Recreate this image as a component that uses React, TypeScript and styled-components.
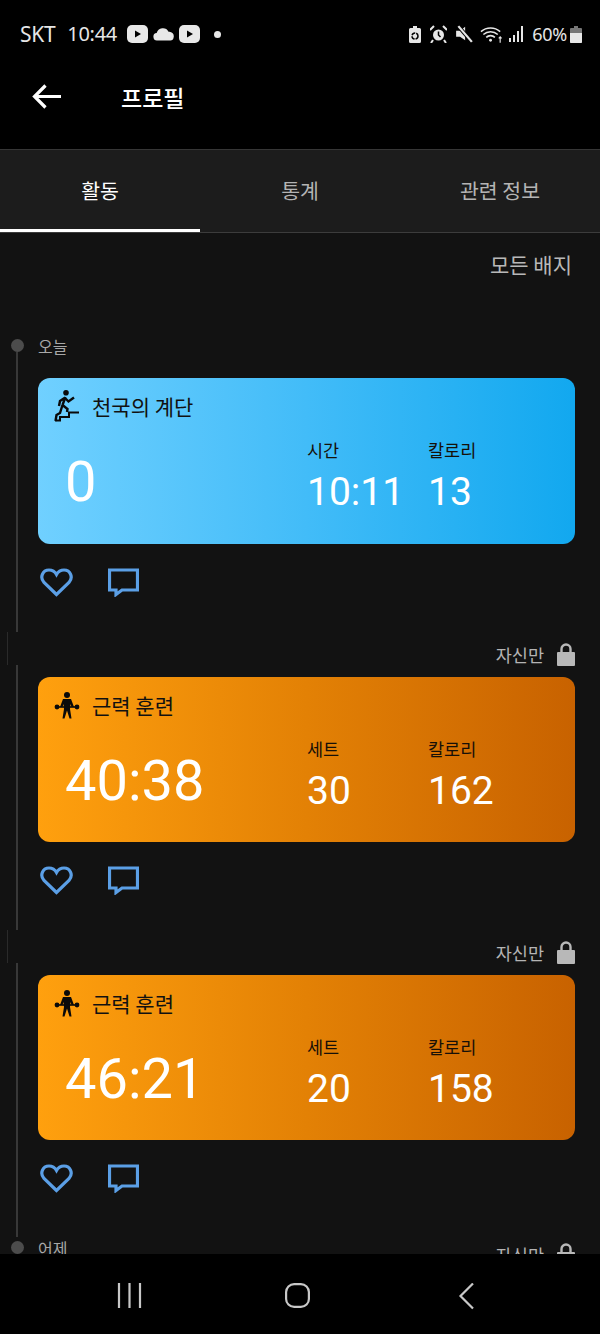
import React from "react";
import styled, { createGlobalStyle } from "styled-components";

const GlobalStyle = createGlobalStyle`
  html, body {
    margin: 0;
    padding: 0;
    background: #000;
  }
  * {
    box-sizing: border-box;
  }
`;

const KOREAN = `"Noto Sans CJK KR", "Noto Sans", sans-serif`;

const Screen = styled.div`
  width: 600px;
  height: 1334px;
  display: flex;
  flex-direction: column;
  overflow: hidden;
  background: #000;
  font-family: ${KOREAN};
`;

const StatusBar = styled.div`
  height: 68px;
  flex-shrink: 0;
  display: flex;
  align-items: center;
  justify-content: space-between;
  padding: 0 18px 0 20px;
  color: #e6e6e6;
`;

const StatusGroup = styled.div`
  display: flex;
  align-items: center;
`;

const StatusText = styled.span<{ $size?: number; $gap?: number }>`
  font-family: "Noto Sans", sans-serif;
  font-size: ${(p) => p.$size ?? 21}px;
  line-height: 24px;
  margin-right: ${(p) => p.$gap ?? 0}px;
  letter-spacing: -0.3px;
`;

const Header = styled.header`
  height: 81px;
  flex-shrink: 0;
  display: flex;
  align-items: flex-start;
  padding: 14px 0 0 32px;
  gap: 59px;
`;

const Title = styled.h1`
  margin: 0;
  color: #fff;
  font-size: 23px;
  font-weight: 500;
  line-height: 30px;
`;

const Tabs = styled.nav`
  height: 84px;
  flex-shrink: 0;
  display: grid;
  grid-template-columns: repeat(3, 200px);
  background: #1c1c1c;
  border-top: 1px solid #363636;
  border-bottom: 1px solid #3c3c3c;
`;

const Tab = styled.div<{ $active?: boolean }>`
  display: flex;
  align-items: center;
  justify-content: center;
  font-size: 20.5px;
  color: ${(p) => (p.$active ? "#fff" : "#b4b4b4")};
  border-bottom: 3px solid ${(p) => (p.$active ? "#fff" : "transparent")};
`;

const Main = styled.main`
  flex: 1;
  min-height: 0;
  overflow: hidden;
  background: #121212;
`;

const BadgeRow = styled.div`
  height: 100px;
  display: flex;
  justify-content: flex-end;
  padding: 17px 28px 0 0;
  color: #b8b8b8;
  font-size: 21px;
  line-height: 28px;
`;

const Entry = styled.article<{ $height?: number }>`
  display: flex;
  height: ${(p) => p.$height ?? 298}px;
`;

const Rail = styled.div`
  width: 38px;
  flex-shrink: 0;
  display: flex;
  flex-direction: column;
`;

const RailLine = styled.div<{ $height?: number }>`
  width: 2px;
  margin-left: 16px;
  background: #383838;
  ${(p) => (p.$height ? `height: ${p.$height}px;` : "flex: 1;")}
`;

const RailStub = styled.div`
  width: 1px;
  height: 33px;
  margin-left: 7px;
  background: #2a2a2a;
`;

const Dot = styled.div<{ $top: number }>`
  width: 13px;
  height: 13px;
  margin: ${(p) => p.$top}px 0 0 11px;
  border-radius: 50%;
  background: #4c4c4c;
`;

const Body = styled.div`
  flex: 1;
  min-width: 0;
  padding-right: 25px;
`;

const Head = styled.div`
  height: 45px;
  display: flex;
  align-items: flex-start;
  justify-content: space-between;
`;

const DateLabel = styled.span<{ $top: number }>`
  margin-top: ${(p) => p.$top}px;
  color: #a8a8a8;
  font-size: 16px;
  line-height: 22px;
`;

const Privacy = styled.div<{ $top: number }>`
  margin: ${(p) => p.$top}px 0 0 auto;
  display: flex;
  align-items: center;
  gap: 13px;
  height: 22px;
  color: #b4b4b4;
  font-size: 17.5px;
`;

const Card = styled.section<{ $tone: "blue" | "orange" }>`
  height: ${(p) => (p.$tone === "blue" ? 166 : 165)}px;
  padding: 14px 0 0 16px;
  border-radius: 12px;
  background: ${(p) =>
    p.$tone === "blue"
      ? "linear-gradient(90deg, #70d0ff 0%, #42bcf8 50%, #12a8ef 100%)"
      : "linear-gradient(90deg, #ffa00e 0%, #e38105 50%, #c86200 100%)"};
`;

const CardTitle = styled.div`
  height: 28px;
  display: flex;
  align-items: center;
  gap: 12px;
  color: #111;
  font-size: 21px;
  line-height: 28px;
`;

const CardBody = styled.div`
  display: flex;
  margin-top: 18px;
  padding-left: 11px;
`;

const BigValue = styled.div`
  width: 242px;
  margin-top: 11px;
  color: #fff;
  font-family: Roboto, sans-serif;
  font-size: 56px;
  line-height: 66px;
`;

const Stat = styled.div`
  width: 121px;
`;

const StatLabel = styled.div`
  color: #161008;
  font-size: 17.5px;
  line-height: 24px;
`;

const StatValue = styled.div`
  margin-top: 8px;
  color: #fff;
  font-family: Roboto, sans-serif;
  font-size: 39px;
  line-height: 44px;
`;

const Actions = styled.div`
  display: flex;
  gap: 35px;
  padding: 24px 0 0 2px;
`;

const NavBar = styled.footer`
  height: 80px;
  flex-shrink: 0;
  display: flex;
  align-items: flex-start;
  gap: 143px;
  padding: 29px 0 0 117px;
  background: #000;
`;

const BackArrow = () => (
  <svg width="30" height="30" viewBox="0 0 30 30" fill="none" stroke="#fff" strokeWidth="3.200">
    <path d="M3 14.500h26M13.500 3.500 2.500 14.500l11 11" />
  </svg>
);

const PlayBadge = () => (
  <svg width="21" height="18" viewBox="0 0 21 18">
    <rect width="21" height="18" rx="5" fill="#e8e8e8" />
    <path d="M8 5.500v7l6-3.500z" fill="#000" />
  </svg>
);

const Cloud = () => (
  <svg width="21" height="14" viewBox="0 0 23 14" style={{ margin: "0 5px" }}>
    <path
      d="M5 14a4 4 0 0 1-1-8 7 7 0 0 1 13-1.500A5 5 0 0 1 22.500 11 3.500 3.500 0 0 1 19 14z"
      fill="#e8e8e8"
    />
  </svg>
);

const StatusIcons = () => (
  <>
    <svg width="12" height="17" viewBox="0 0 12 17" style={{ marginRight: 9 }}>
      <path d="M4 0h4v2h2.500q1.500 0 1.500 1.500V15.500q0 1.500-1.500 1.500h-9Q0 17 0 15.500V3.500Q0 2 1.500 2H4z" fill="#e6e6e6" />
      <circle cx="6" cy="10" r="3" fill="none" stroke="#000" strokeWidth="1.500" strokeDasharray="4 1" />
    </svg>
    <svg width="17" height="18" viewBox="0 0 17 18" style={{ marginRight: 8 }}>
      <circle cx="8.500" cy="10" r="5.500" fill="#e6e6e6" />
      <path d="M8.500 6.500V10l2 2" fill="none" stroke="#000" strokeWidth="1.500" />
      <path d="M0 5 4 1M17 5l-4-4M3 15l-2 3M14 15l2 3" stroke="#e6e6e6" strokeWidth="2" />
    </svg>
    <svg width="18" height="18" viewBox="0 0 16 16" style={{ marginRight: 7 }}>
      <path d="M1 5h3.500L9 1.500v12L4.500 10.500H1z" fill="#e6e6e6" />
      <path d="M2 0l13 15" stroke="#000" strokeWidth="3.500" />
      <path d="M3 1l12 14" stroke="#e6e6e6" strokeWidth="2" />
    </svg>
    <svg width="24" height="20" viewBox="0 0 25 20" fill="none" stroke="#e6e6e6" style={{ marginRight: 5 }}>
      <path d="M1 7.500a15 15 0 0 1 20 0M3.500 10.500a11 11 0 0 1 15 0M6.500 13.500a6.500 6.500 0 0 1 9 0" strokeWidth="1.600" />
      <circle cx="11" cy="16.500" r="1.500" fill="#e6e6e6" stroke="none" />
      <path d="M21 19v-6M19.500 14.500 21 13l1.500 1.500" strokeWidth="1.200" />
    </svg>
    <svg width="15" height="16" viewBox="0 0 15 16" fill="#e6e6e6" style={{ marginRight: 8 }}>
      <rect x="0" y="12" width="2" height="4" />
      <rect x="4" y="9" width="2" height="7" />
      <rect x="8" y="5" width="2" height="11" />
      <rect x="12" y="0" width="2" height="16" />
    </svg>
  </>
);

const BatteryIcon = () => (
  <svg width="12" height="17" viewBox="0 0 12 17" style={{ marginLeft: 3 }}>
    <path d="M4 0h4v2h3q1 0 1 1v13q0 1-1 1H1q-1 0-1-1V3q0-1 1-1h3z" fill="#777" />
    <path d="M0 7h12v9q0 1-1 1H1q-1 0-1-1z" fill="#e8e8e8" />
  </svg>
);

const StairsIcon = () => (
  <svg width="26" height="32" viewBox="0 0 26 32" fill="none" stroke="#0a0a0a" strokeWidth="2.400">
    <circle cx="12" cy="2.800" r="2.800" fill="#0a0a0a" stroke="none" />
    <path d="M11.500 7 8.500 15M10.500 8 6 11l-1 5M11 8l3.500 3.500L20 7.500" />
    <path d="M8.500 15l5 4-.5 3M8.500 15 6 23l-3.500 2-1 6" />
    <path d="M1 30.500h5V27h9v-4.500h10" strokeWidth="2" />
  </svg>
);

const LifterIcon = () => (
  <svg width="26" height="27" viewBox="0 0 26 27" fill="none" stroke="#0a0a0a">
    <circle cx="13" cy="3" r="3" fill="#0a0a0a" stroke="none" />
    <path d="M9 7h8l3 8h-2.500l-1-3-.500 5 1.500 9.500h-2L13 18.500l-2.500 8h-2l1.500-9.500-.500-5-1 3H6z" fill="#0a0a0a" stroke="none" />
    <path d="M1 15h24" strokeWidth="1.600" />
    <circle cx="3" cy="15" r="2.400" fill="#0a0a0a" stroke="none" />
    <circle cx="23" cy="15" r="2.400" fill="#0a0a0a" stroke="none" />
  </svg>
);

const HeartIcon = () => (
  <svg width="33" height="29" viewBox="0 0 33 29" fill="none" stroke="#5b9fe6" strokeWidth="3.200">
    <path d="M16.500 26.500 4 14.500C-.500 9.500 2.500 2 9 2c3.500 0 6 1.800 7.500 4.500C18 3.800 20.500 2 24 2c6.500 0 9.500 7.500 5 12.500z" />
  </svg>
);

const ChatIcon = () => (
  <svg width="31" height="29" viewBox="0 0 31 29" fill="none" stroke="#5b9fe6" strokeWidth="3.200" style={{ display: "block" }}>
    <path d="M1.500 2h28v20H14l-6 4.500V22H1.500z" />
  </svg>
);

const LockIcon = () => (
  <svg width="18" height="23" viewBox="0 0 18 23">
    <path d="M4.500 10V6a4.500 4.500 0 0 1 9 0v4" fill="none" stroke="#b8b8b8" strokeWidth="2.400" />
    <rect y="9" width="18" height="14" rx="1" fill="#b8b8b8" />
  </svg>
);

interface StatData {
  label: string;
  value: string;
}

interface WorkoutCardProps {
  tone: "blue" | "orange";
  icon: React.ReactNode;
  title: string;
  big: string;
  stats: StatData[];
}

const WorkoutCard: React.FC<WorkoutCardProps> = ({ tone, icon, title, big, stats }) => (
  <Card $tone={tone}>
    <CardTitle>
      {icon}
      <span>{title}</span>
    </CardTitle>
    <CardBody>
      <BigValue>{big}</BigValue>
      {stats.map((stat) => (
        <Stat key={stat.label}>
          <StatLabel>{stat.label}</StatLabel>
          <StatValue>{stat.value}</StatValue>
        </Stat>
      ))}
    </CardBody>
  </Card>
);

const PrivateTag: React.FC<{ top: number }> = ({ top }) => (
  <Privacy $top={top}>
    자신만
    <LockIcon />
  </Privacy>
);

const ActionRow = () => (
  <Actions>
    <HeartIcon />
    <ChatIcon />
  </Actions>
);

const workouts = [
  { big: "40:38", stats: [{ label: "세트", value: "30" }, { label: "칼로리", value: "162" }] },
  { big: "46:21", stats: [{ label: "세트", value: "20" }, { label: "칼로리", value: "158" }] },
];

const App: React.FC = () => {
  return (
    <Screen>
      <GlobalStyle />
      <StatusBar>
        <StatusGroup>
          <StatusText $gap={12}>SKT</StatusText>
          <StatusText $size={20} $gap={10}>10:44</StatusText>
          <PlayBadge />
          <Cloud />
          <PlayBadge />
          <svg width="7" height="7" viewBox="0 0 7 7" style={{ marginLeft: 14 }}>
            <circle cx="3.500" cy="3.500" r="3.500" fill="#e8e8e8" />
          </svg>
        </StatusGroup>
        <StatusGroup>
          <StatusIcons />
          <StatusText $size={18}>60%</StatusText>
          <BatteryIcon />
        </StatusGroup>
      </StatusBar>

      <Header>
        <BackArrow />
        <Title>프로필</Title>
      </Header>

      <Tabs>
        <Tab $active>활동</Tab>
        <Tab>통계</Tab>
        <Tab>관련 정보</Tab>
      </Tabs>

      <Main>
        <BadgeRow>모든 배지</BadgeRow>

        <Entry $height={299}>
          <Rail>
            <Dot $top={6} />
            <RailLine />
          </Rail>
          <Body>
            <Head>
              <DateLabel $top={2}>오늘</DateLabel>
            </Head>
            <WorkoutCard
              tone="blue"
              icon={<StairsIcon />}
              title="천국의 계단"
              big="0"
              stats={[
                { label: "시간", value: "10:11" },
                { label: "칼로리", value: "13" },
              ]}
            />
            <ActionRow />
          </Body>
        </Entry>

        {workouts.map((workout) => (
          <Entry key={workout.big}>
            <Rail>
              <RailStub />
              <RailLine />
            </Rail>
            <Body>
              <Head>
                <PrivateTag top={11} />
              </Head>
              <WorkoutCard
                tone="orange"
                icon={<LifterIcon />}
                title="근력 훈련"
                big={workout.big}
                stats={workout.stats}
              />
              <ActionRow />
            </Body>
          </Entry>
        ))}

        <Entry>
          <Rail>
            <RailLine $height={9} />
            <Dot $top={4} />
          </Rail>
          <Body>
            <Head>
              <DateLabel $top={9}>어제</DateLabel>
              <PrivateTag top={15} />
            </Head>
          </Body>
        </Entry>
      </Main>

      <NavBar>
        <svg width="25" height="25" viewBox="0 0 25 25" stroke="#c8c8c8" strokeWidth="2.200">
          <path d="M2 0v25M12.500 0v25M23 0v25" />
        </svg>
        <svg width="25" height="25" viewBox="0 0 25 25" fill="none" stroke="#c8c8c8" strokeWidth="2.200">
          <rect x="1.100" y="1.100" width="22.800" height="22.800" rx="8" />
        </svg>
        <svg width="27" height="27" viewBox="0 0 27 27" fill="none" stroke="#c8c8c8" strokeWidth="2.200">
          <path d="M20 0.500 7.500 13 20 25.500" />
        </svg>
      </NavBar>
    </Screen>
  );
};

export default App;
